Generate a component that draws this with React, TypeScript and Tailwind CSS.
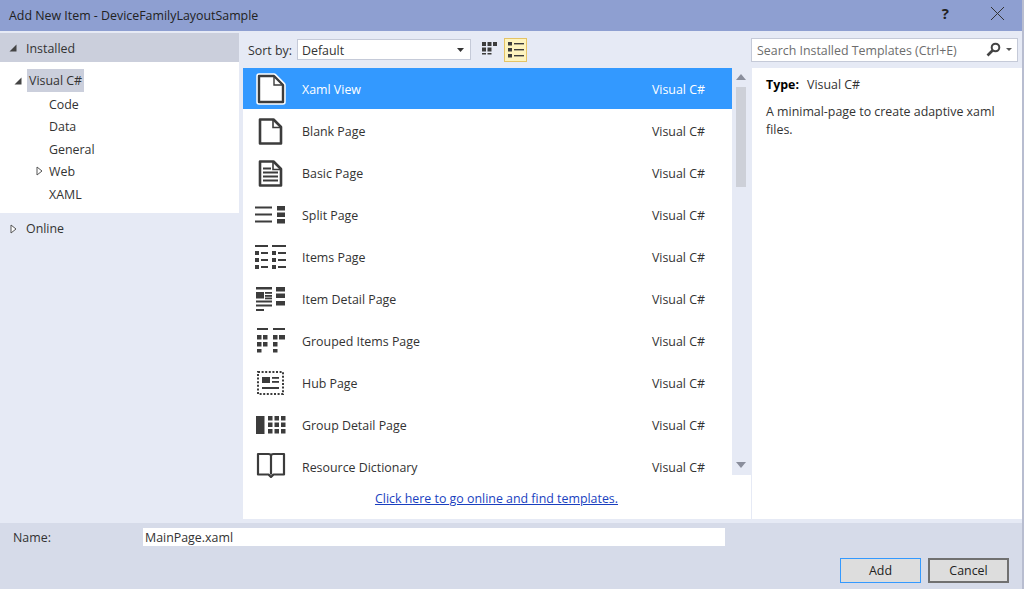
const font = "[font-family:'Open_Sans','Noto_Sans',sans-serif]"

const ink = '#3c3c3c'

function Bars({ items }: { items: number[][] }) {
  return (
    <>
      {items.map(([x, y, w, h], i) => (
        <rect key={i} x={x} y={y} width={w} height={h} fill={ink} />
      ))}
    </>
  )
}

const PAGE = 'M5 4.5h13.5l7.5 7.5v16.5H5z'
const FOLD = 'M18 4.5v8h8'

function BlankIcon() {
  return (
    <>
      <path d={PAGE} fill="#fff" stroke={ink} strokeWidth="2.6" strokeLinejoin="round" />
      <path d={FOLD} fill="none" stroke={ink} strokeWidth="1.6" />
    </>
  )
}

function XamlIcon() {
  return (
    <>
      <path d="M4 3h15l9 9v17H4z" fill="none" stroke="#fff" strokeWidth="5.5" strokeLinejoin="round" />
      <path d="M4 3h15l9 9v17H4z" fill="#fff" stroke={ink} strokeWidth="2.4" strokeLinejoin="round" />
      <path d="M19 3v9h9" fill="none" stroke={ink} strokeWidth="1.4" />
    </>
  )
}

function BasicIcon() {
  return (
    <>
      <BlankIcon />
      <Bars items={[[8, 10.5, 8, 2], [8, 14.5, 15, 2], [8, 18.5, 15, 2], [8, 22.5, 15, 2]]} />
    </>
  )
}

function SplitIcon() {
  return (
    <Bars
      items={[
        [0, 7.5, 17, 2], [0, 14.5, 17, 2], [0, 21.5, 17, 2],
        [22, 7, 8, 4.5], [22, 13.5, 8, 4.5], [22, 20, 8, 4.5],
      ]}
    />
  )
}

function ItemsIcon() {
  const rows = [10, 17, 24]
  return (
    <Bars
      items={[
        [0, 4, 13, 2], [17, 4, 14, 2],
        ...rows.flatMap(y => [
          [0, y, 4, 4], [6, y + 1, 7, 2],
          [17, y, 4, 4], [23, y + 1, 8, 2],
        ]),
      ]}
    />
  )
}

function DetailIcon() {
  return (
    <Bars
      items={[
        [1, 4, 16, 2.5], [1, 9, 8, 6.5], [10, 9, 7, 1.8], [10, 12, 7, 1.8], [10, 14.5, 7, 1.8],
        [1, 17.5, 16, 2], [1, 21.5, 16, 2], [1, 26, 8, 2],
        [21, 4, 9, 4.5], [21, 10.5, 9, 4.5], [21, 18, 9, 4.5],
      ]}
    />
  )
}

function GroupedIcon() {
  return (
    <Bars
      items={[
        [2, 3, 11, 2], [18, 3, 12, 2],
        [2, 10, 4.5, 4.5], [8, 10, 4.5, 4.5], [18, 10, 4.5, 4.5], [24, 10, 6, 4.5],
        [2, 17, 4.5, 4.5], [8, 17, 4.5, 4.5], [18, 17, 4.5, 4.5],
        [2, 24, 4.5, 3.5],
        [18, 24, 4.5, 3.5],
      ]}
    />
  )
}

function HubIcon() {
  return (
    <>
      <rect x="3" y="5" width="25" height="22" fill="none" stroke={ink} strokeWidth="2" strokeDasharray="2 1.6" />
      <Bars items={[[7, 10, 8, 6], [17, 10, 7, 1.8], [17, 14, 7, 1.8], [7, 20, 17, 2]]} />
    </>
  )
}

function GroupDetailIcon() {
  const xs = [13, 19.5, 26]
  const ys = [7, 13.5, 20]
  return (
    <Bars
      items={[
        [1, 7, 8.5, 18],
        ...ys.flatMap(y => xs.map(x => [x, y, 4.5, 4.5])),
      ]}
    />
  )
}

function BookIcon() {
  return (
    <path
      d="M3 3h10.5q2.5 0 2.5 2 0-2 2.5-2H29v20.5H18.5L16 26l-2.5-2.5H3zM16 5v18.5"
      fill="#fff"
      stroke={ink}
      strokeWidth="2.2"
      strokeLinejoin="round"
    />
  )
}

const templates = [
  { name: 'Xaml View', icon: <XamlIcon /> },
  { name: 'Blank Page', icon: <BlankIcon /> },
  { name: 'Basic Page', icon: <BasicIcon /> },
  { name: 'Split Page', icon: <SplitIcon /> },
  { name: 'Items Page', icon: <ItemsIcon /> },
  { name: 'Item Detail Page', icon: <DetailIcon /> },
  { name: 'Grouped Items Page', icon: <GroupedIcon /> },
  { name: 'Hub Page', icon: <HubIcon /> },
  { name: 'Group Detail Page', icon: <GroupDetailIcon /> },
  { name: 'Resource Dictionary', icon: <BookIcon /> },
]

function Expanded() {
  return (
    <svg width="8" height="8" viewBox="0 0 8 8" className="shrink-0">
      <path d="M7.5 0.5v7h-7z" fill="#444" />
    </svg>
  )
}

function Collapsed() {
  return (
    <svg width="7" height="10" viewBox="0 0 7 10" className="shrink-0">
      <path d="M1 1l5 4-5 4z" fill="#fff" stroke="#555" />
    </svg>
  )
}

function TreeLeaf({ label, arrow }: { label: string; arrow?: boolean }) {
  return (
    <div className="flex h-[22.5px] items-center pl-[36px]">
      <span className="flex w-[13px] items-center">{arrow && <Collapsed />}</span>
      <span className="pt-[4px]">{label}</span>
    </div>
  )
}

function Sidebar() {
  return (
    <div className="flex w-[239px] shrink-0 flex-col pt-[2px]">
      <div className="flex h-[29px] items-center gap-[9px] bg-[#cbcfdc] pl-[9px]">
        <Expanded />
        <span className="pt-[4px]">Installed</span>
      </div>
      <div className="flex h-[151px] flex-col bg-white pt-[7px]">
        <div className="flex h-[23px] items-center pl-[14px]">
          <Expanded />
          <span className="ml-[5px] flex h-[23px] items-center bg-[#cbcfdc] px-[2px] pt-[1px]">Visual C#</span>
        </div>
        <TreeLeaf label="Code" />
        <TreeLeaf label="Data" />
        <TreeLeaf label="General" />
        <TreeLeaf label="Web" arrow />
        <TreeLeaf label="XAML" />
      </div>
      <div className="flex h-[31px] items-center gap-[9px] pl-[10px]">
        <Collapsed />
        <span className="pt-[2px]">Online</span>
      </div>
    </div>
  )
}

function Toolbar() {
  return (
    <div className="flex h-[37px] items-center">
      <span className="ml-[5px] w-[49px] pt-[4px]">Sort by:</span>
      <div className="flex h-[21px] w-[174px] items-center justify-between border border-[#c5cad8] bg-white pl-[4px] pr-[6px]">
        <span className="pt-[3px]">Default</span>
        <svg width="7" height="4" viewBox="0 0 7 4">
          <path d="M0 0h7L3.5 4z" fill="#333" />
        </svg>
      </div>
      <svg width="16" height="16" viewBox="0 0 16 16" className="ml-[11px]">
        <Bars
          items={[
            [0, 0, 4, 4], [5.5, 0, 4, 4], [11, 0, 4, 4],
            [0, 5.5, 4, 4], [5.5, 5.5, 4, 4],
            [0, 11, 4, 1.5], [5.5, 11, 4, 1.5],
          ]}
        />
      </svg>
      <div className="ml-[6px] flex h-[24px] w-[23px] items-center justify-center border border-[#e5c365] bg-[#fdf4bf]">
        <svg width="16" height="16" viewBox="0 0 16 16">
          <Bars
            items={[
              [0, 0, 4, 3.5], [6, 1, 10, 1.4],
              [0, 6, 4, 3.5], [6, 7, 10, 1.4],
              [0, 12, 4, 3.5], [6, 13, 10, 1.4],
            ]}
          />
        </svg>
      </div>
    </div>
  )
}

function TemplateList() {
  return (
    <div className="flex min-h-0 flex-1 bg-white">
      <div className="flex min-w-0 flex-1 flex-col">
        <div className="h-[410px] overflow-hidden">
          {templates.map((t, i) => (
            <div
              key={t.name}
              className={
                i === 0
                  ? 'flex h-[42px] items-center border-b border-white bg-[#3399ff] pt-[1px] text-white'
                  : 'flex h-[42px] items-center'
              }
            >
              <svg width="32" height="32" viewBox="0 0 32 32" className="ml-[12px] shrink-0">
                {t.icon}
              </svg>
              <span className="ml-[15px] flex-1 pt-[2px]">{t.name}</span>
              <span className="mr-[27px] pt-[2px]">Visual C#</span>
            </div>
          ))}
        </div>
        <div className="flex flex-1 items-center justify-center pl-[18px] pt-[2px]">
          <span className="text-[#1a3fbf] underline">Click here to go online and find templates.</span>
        </div>
      </div>
      <div className="w-[20px] shrink-0 border-r border-[#e6eaf5]">
        <div className="flex h-[407px] flex-col items-center bg-[#e6eaf5] pb-[7px] pr-[2px] pt-[6px]">
          <svg width="10" height="6" viewBox="0 0 10 6" className="shrink-0">
            <path d="M5 0l5 6H0z" fill="#8a8e9c" />
          </svg>
          <div className="mt-[7px] h-[100px] w-[10px] bg-[#cdd0d8]" />
          <svg width="10" height="6" viewBox="0 0 10 6" className="mt-auto shrink-0">
            <path d="M0 0h10L5 6z" fill="#8a8e9c" />
          </svg>
        </div>
      </div>
    </div>
  )
}

function SearchBox() {
  return (
    <div className="flex h-[37px] items-center">
      <div className="-ml-[1px] flex h-[24px] w-[267px] items-center border border-[#c5cad8] bg-white pl-[5px] pr-[5px]">
        <span className="flex-1 pt-[4px] text-[#6d6d6d]">Search Installed Templates (Ctrl+E)</span>
        <svg width="15" height="15" viewBox="0 0 15 15">
          <circle cx="9.5" cy="5.5" r="3.8" fill="none" stroke="#444" strokeWidth="2" />
          <path d="M6.5 8.5L1.5 13.5" stroke="#444" strokeWidth="2.6" />
        </svg>
        <svg width="6" height="3" viewBox="0 0 6 3" className="ml-[5px]">
          <path d="M0 0h6L3 3z" fill="#555" />
        </svg>
      </div>
    </div>
  )
}

function DetailsPane() {
  return (
    <div className="flex-1 bg-white pl-[14px] pr-[20px] pt-[8px]">
      <div className="flex h-[18px] items-center">
        <span className="w-[41px] font-bold text-black">Type:</span>
        <span>Visual C#</span>
      </div>
      <p className="mt-[9px] leading-[18px]">A minimal-page to create adaptive xaml files.</p>
    </div>
  )
}

export default function App() {
  return (
    <div className={`flex h-[589px] w-[1024px] ${font} text-[12.4px] text-[#333]`}>
      <div className="flex w-[1022px] flex-col bg-[#e6eaf5]">
        <div className="flex h-[31px] shrink-0 items-center bg-[#8e9fd1] pl-[9px]">
          <span className="flex-1 pt-[2px] text-[#222]">Add New Item - DeviceFamilyLayoutSample</span>
          <span className="mb-[5px] mr-[42px] text-[15px] font-bold text-[#222]">?</span>
          <svg width="13" height="13" viewBox="0 0 13 13" className="mb-[4px] mr-[18px]">
            <path d="M0 0l13 13M13 0L0 13" stroke="#333" strokeWidth="1" />
          </svg>
        </div>

        <div className="flex h-[492px] shrink-0">
          <Sidebar />
          <div className="ml-[4px] flex h-[488px] w-[509px] shrink-0 flex-col">
            <Toolbar />
            <TemplateList />
          </div>
          <div className="flex h-[488px] flex-1 flex-col">
            <SearchBox />
            <DetailsPane />
          </div>
        </div>

        <div className="flex-1 bg-[#d6dbe9] pt-[5px]">
          <div className="flex h-[18px] items-center">
            <span className="ml-[13px] w-[130px] pt-[3px]">Name:</span>
            <div className="flex h-[18px] w-[582px] items-center bg-white pl-[2px] pt-[3px]">MainPage.xaml</div>
          </div>
          <div className="mt-[12px] flex justify-end gap-[7px] pr-[13px]">
            <button className="h-[25px] w-[81px] border border-[#3399ff] bg-[#dddddd] pt-[2px] text-[#222]">Add</button>
            <button className="h-[25px] w-[81px] border-2 border-[#707070] bg-[#dddddd] pt-[2px] text-[#222]">Cancel</button>
          </div>
        </div>
      </div>
      <div className="flex-1 bg-[#b8bdd0]" />
    </div>
  )
}
